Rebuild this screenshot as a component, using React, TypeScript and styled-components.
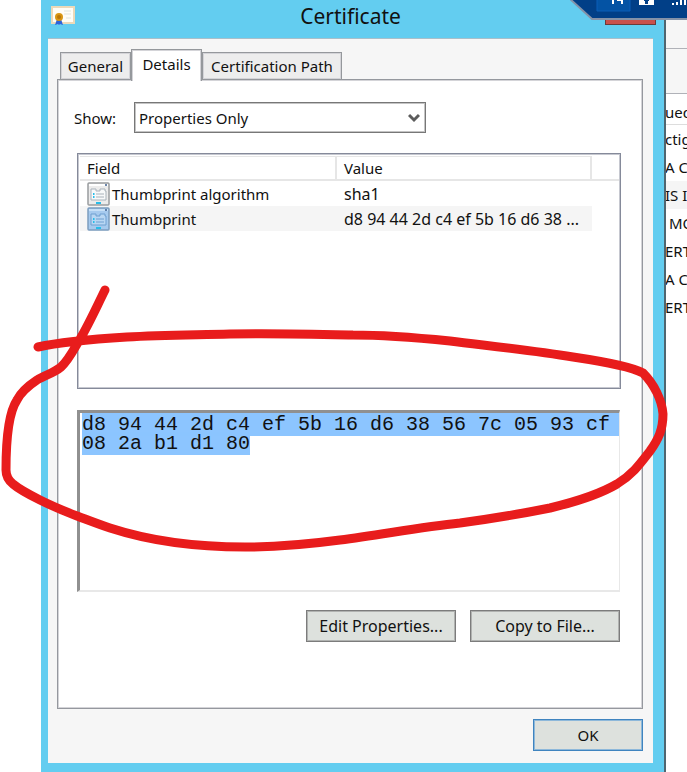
import React, { useEffect, useRef, useState } from "react";
import styled, { createGlobalStyle } from "styled-components";

const GlobalStyle = createGlobalStyle`
  * { box-sizing: border-box; }
  body {
    margin: 0;
    background: #fff;
    color: #111;
    font-family: "Noto Sans", "Open Sans", sans-serif;
    font-size: 15px;
    line-height: 20px;
    overflow: hidden;
  }
  button, select, textarea { font: inherit; color: inherit; margin: 0; }
`;

const Desktop = styled.div`
  position: relative;
  display: flex;
  min-height: 100vh;
  padding-left: 41px;
  overflow: hidden;
`;

const Dialog = styled.main`
  flex: 1;
  min-width: 0;
  display: flex;
  flex-direction: column;
  padding: 0 11px 9px 7px;
  background: #63cdf0;
`;

const TitleBar = styled.header`
  position: relative;
  display: flex;
  align-items: center;
  justify-content: center;
  height: 38px;
  padding-bottom: 6px;
`;

const TitleIcon = styled.svg`
  position: absolute;
  left: 3px;
  top: 6px;
`;

const Title = styled.h1`
  margin: 0;
  font-size: 21px;
  font-weight: 400;
  line-height: 28px;
`;

const CloseButton = styled.button`
  position: absolute;
  right: -3px;
  top: 0;
  width: 51px;
  height: 25px;
  border: 1px solid #6b3a3a;
  border-top: 0;
  background: #c9504c;
`;

const Client = styled.div`
  flex: 1;
  display: flex;
  flex-direction: column;
  padding: 10px 10px 12px 9px;
  border-top: 1px solid #a9bfca;
  background: #f6f6f6;
`;

const TabList = styled.div`
  display: flex;
  align-items: flex-end;
  padding-left: 3px;
`;

const Tab = styled.button<{ $active?: boolean; $width: number }>`
  position: relative;
  z-index: ${(p) => (p.$active ? 1 : 0)};
  flex: 0 0 ${(p) => p.$width}px;
  height: ${(p) => (p.$active ? 32 : 28)}px;
  margin-bottom: ${(p) => (p.$active ? -2 : -1)}px;
  padding: 0 0 ${(p) => (p.$active ? 3 : 0)}px;
  border: 1px solid #95989c;
  border-bottom-width: ${(p) => (p.$active ? 0 : 1)}px;
  box-shadow: ${(p) => (p.$active ? "inset 1px 0 #d4d4d8, inset -1px 0 #d4d4d8, inset 0 1px #d4d4d8" : "inset 0 0 0 1px #d4d4d8")};
  background: ${(p) => (p.$active ? "#fff" : "#ededed")};
  white-space: nowrap;
`;

const TabPage = styled.section`
  flex: 1;
  display: flex;
  flex-direction: column;
  padding: 22px 21px 66px 16px;
  border: 1px solid #95989e;
  box-shadow: inset 0 0 0 1px #d4d4d8;
  background: #fff;
`;

const ShowRow = styled.div`
  display: flex;
  align-items: center;
`;

const ShowLabel = styled.label`
  width: 60px;
`;

const SelectBox = styled.div`
  display: grid;
  flex: 0 1 292px;
  align-items: center;
  > * { grid-area: 1 / 1; }
  > svg { justify-self: end; margin-right: 6px; pointer-events: none; }
`;

const Select = styled.select`
  appearance: none;
  width: 100%;
  height: 31px;
  padding: 0 24px 0 4px;
  border: 1px solid #777;
  box-shadow: inset 0 0 0 1px #c4c4c4;
  border-radius: 0;
  background: #fff;
  outline: 0;
`;

const ListBox = styled.div`
  height: 236px;
  margin: 20px 0 0 3px;
  padding: 2px 1px 2px 2px;
  border: 1px solid #858a9a;
  box-shadow: inset 0 0 0 1px #c6c8d0;
`;

const FieldTable = styled.table`
  width: 100%;
  border-collapse: separate;
  border-spacing: 0;
  table-layout: fixed;
  col:nth-child(1) { width: 257px; }
  col:nth-child(3) { width: 27px; }
`;

const HeadCell = styled.th<{ $blank?: boolean }>`
  height: 25px;
  padding: 0 7px;
  border: 0 solid #e6e6e6;
  border-width: ${(p) => (p.$blank ? "0 0 2px" : "1px 2px 2px 0")};
  font-weight: 400;
  text-align: left;
`;

const Cell = styled.td<{ $selected?: boolean; $value?: boolean }>`
  height: 25px;
  padding: 0 7px;
  font-size: ${(p) => (p.$value ? 16 : 15)}px;
  background: ${(p) => (p.$selected ? "#f5f5f5" : "transparent")};
  white-space: nowrap;
  overflow: hidden;
  text-overflow: ellipsis;
`;

const FieldName = styled.div`
  display: flex;
  align-items: center;
  gap: 2px;
`;

const Detail = styled.textarea`
  display: block;
  height: 182px;
  margin: 21px 1px 0 3px;
  padding: 2px 0 0 2px;
  border: 3px solid #858585;
  border-width: 3px 1px 2px 3px;
  border-color: #909090 #e8e8e8 #e8e8e8 #909090;
  border-radius: 0;
  outline: 0;
  resize: none;
  overflow: hidden;
  font-family: "Liberation Mono", monospace;
  font-size: 20px;
  line-height: 19px;
  &::selection { background: rgba(139, 196, 255, 0.99); color: #111; }
`;

const Actions = styled.div`
  display: flex;
  justify-content: flex-end;
  gap: 14px;
  margin: 18px 1px 0 0;
`;

const PushButton = styled.button<{ $primary?: boolean }>`
  width: ${(p) => (p.$primary ? 110 : 150)}px;
  height: 32px;
  padding: 0;
  border: 1px solid ${(p) => (p.$primary ? "#3f84bf" : "#7c7c7c")};
  box-shadow: inset 0 0 0 1px ${(p) => (p.$primary ? "#8db8da" : "#b0b2b0")};
  background: #dde1dd;
  font-size: ${(p) => (p.$primary ? 15 : 16)}px;
`;

const Footer = styled.footer`
  display: flex;
  justify-content: flex-end;
  padding-top: 10px;
`;

const Behind = styled.aside`
  flex: 0 0 23px;
  overflow: hidden;
  border-left: 2px solid #4f6670;
  background: #fff;
  white-space: pre;
`;

const ToolStrip = styled.div<{ $height: number }>`
  height: ${(p) => p.$height}px;
  border-bottom: 1px solid #b0b2b8;
  background: #f6f6f6;
`;

const BehindRow = styled.div<{ $shade?: boolean; $head?: boolean }>`
  height: ${(p) => (p.$head ? 31 : 28)}px;
  padding-top: ${(p) => (p.$head ? 8 : 4)}px;
  border-bottom: ${(p) => (p.$head ? 1 : 0)}px solid #ddd;
  text-indent: -1px;
  background: ${(p) => (p.$shade ? "#f5f5f5" : "transparent")};
`;

const ConnectionBar = styled.svg`
  position: absolute;
  top: 0;
  right: 0;
`;

const Ink = styled.svg`
  position: absolute;
  left: 0;
  top: 0;
  pointer-events: none;
`;

function CertificateIcon() {
  return (
    <TitleIcon width="24" height="21" viewBox="0 0 24 21" aria-hidden="true">
      <rect x="1" y="1" width="22" height="16" fill="#fffdf6" stroke="#ecd9b8" strokeWidth="2" />
      <path d="M13 5h7M13 8h7M15 12h5" stroke="#dfe5e0" strokeWidth="1" />
      <path d="M6 13l-2 6 3-1 1 1 1-1 3 1-2-6z" fill="#2f62d9" />
      <circle cx="8" cy="11" r="4" fill="#d99614" />
      <circle cx="8" cy="11" r="2" fill="#b97508" />
    </TitleIcon>
  );
}

function PropertyIcon({ selected }: { selected?: boolean }) {
  const line = selected ? "#6f9fd0" : "#a9b2ba";
  return (
    <svg width="23" height="24" viewBox="0 0 23 24" aria-hidden="true">
      <rect x="1" y="1" width="21" height="22" rx="1" fill={selected ? "#a6caee" : "#ececec"} stroke={selected ? "#7c9dbf" : "#999c9e"} strokeWidth="1.5" />
      <path d="M2 3h19" stroke={selected ? "#c7e0f7" : "#fff"} strokeWidth="2" />
      <path d="M18 3h2" stroke="#3d5f91" strokeWidth="1.5" />
      <path d="M4 18V7h5v2h4V7h5v2h1v9z" fill={selected ? "#b9d7f3" : "#f8f9fa"} stroke={line} />
      <path d="M9 12h8M9 15h8" stroke={line} />
      <path d="M6 12h1.5M6 15h1.5M9 21h5" stroke="#27bde9" strokeWidth="2" />
    </svg>
  );
}

const behindRows = ["ctig", "A C", "IS I", " MO", "ERT", "A C", "ERT"];
const tabs = [
  { name: "General", width: 71 },
  { name: "Details", width: 71 },
  { name: "Certification Path", width: 140 },
];
const thumbprint = "d8 94 44 2d c4 ef 5b 16 d6 38 56 7c 05 93 cf 08 2a b1 d1 80";

export default function App() {
  const detail = useRef<HTMLTextAreaElement>(null);
  const [active, setActive] = useState("Details");

  useEffect(() => {
    detail.current?.focus();
    detail.current?.select();
  }, []);

  return (
    <>
      <GlobalStyle />
      <Desktop>
        <Dialog>
          <TitleBar>
            <CertificateIcon />
            <Title>Certificate</Title>
            <CloseButton type="button" aria-label="Close" />
          </TitleBar>
          <Client>
            <TabList role="tablist">
              {tabs.map((t) => (
                <Tab
                  key={t.name}
                  type="button"
                  role="tab"
                  aria-selected={t.name === active}
                  $active={t.name === active}
                  $width={t.width}
                  onClick={() => setActive(t.name)}
                >
                  {t.name}
                </Tab>
              ))}
            </TabList>
            <TabPage>
              <ShowRow>
                <ShowLabel htmlFor="show">Show:</ShowLabel>
                <SelectBox>
                  <Select id="show" defaultValue="Properties Only">
                    <option>Properties Only</option>
                  </Select>
                  <svg width="12" height="10" viewBox="0 0 12 10" aria-hidden="true">
                    <path d="M1 2l5 5 5-5" fill="none" stroke="#5c5c5c" strokeWidth="3" />
                  </svg>
                </SelectBox>
              </ShowRow>
              <ListBox>
                <FieldTable>
                  <colgroup><col /><col /><col /></colgroup>
                  <thead>
                    <tr>
                      <HeadCell scope="col">Field</HeadCell>
                      <HeadCell scope="col">Value</HeadCell>
                      <HeadCell as="td" $blank />
                    </tr>
                  </thead>
                  <tbody>
                    <tr>
                      <Cell><FieldName><PropertyIcon />Thumbprint algorithm</FieldName></Cell>
                      <Cell $value>sha1</Cell>
                    </tr>
                    <tr>
                      <Cell $selected><FieldName><PropertyIcon selected />Thumbprint</FieldName></Cell>
                      <Cell $selected $value>d8 94 44 2d c4 ef 5b 16 d6 38 ...</Cell>
                    </tr>
                  </tbody>
                </FieldTable>
              </ListBox>
              <Detail ref={detail} aria-label="Thumbprint value" readOnly spellCheck={false} value={thumbprint} />
              <Actions>
                <PushButton type="button">Edit Properties...</PushButton>
                <PushButton type="button">Copy to File...</PushButton>
              </Actions>
            </TabPage>
            <Footer>
              <PushButton type="button" $primary>OK</PushButton>
            </Footer>
          </Client>
        </Dialog>
        <Behind>
          <ToolStrip $height={49} />
          <ToolStrip $height={45} />
          <BehindRow $head>ued</BehindRow>
          {behindRows.map((text, i) => (
            <BehindRow key={i} $shade={i === 2}>{text}</BehindRow>
          ))}
        </Behind>
        <ConnectionBar width="117" height="21" viewBox="0 0 117 21" aria-hidden="true">
          <path d="M0 -1L22 19H118V-1z" fill="#013f87" stroke="#8492a8" strokeWidth="2" />
          <path d="M27 -1h33v12H27z" fill="#0453a4" stroke="#0a5fb8" />
          <path d="M43 0v4M52 0v4" stroke="#fff" strokeWidth="2" />
          <path d="M47 0h6v1h-6z" fill="#fff" />
          <path d="M69 0h15v5H69z" fill="#fff" />
          <path d="M74 0h5v1h-1v3h-3V1h-1z" fill="#013f87" />
          <path d="M103 3v2M107 2v3M111 0v5M115 0v5" stroke="#fff" strokeWidth="2" />
        </ConnectionBar>
        <Ink width="687" height="772" viewBox="0 0 687 772" fill="none" stroke="#e81c1c" strokeWidth="9" strokeLinecap="round" strokeLinejoin="round" aria-hidden="true">
          <path d="M105 290C97 306 89 324 80 339C73 351 68 361 61 367C54 373 45 375 37 380C28 386 21 392 17 400C9 412 6 440 6 470C6 476 8 480 13 484C20 490 30 495 40 500C52 506 64 511 77 516C88 520 98 524 110 528C150 541 200 547 245 547C280 547 310 544 340 540C380 535 420 527 460 523C490 519 520 514 550 508C575 502 600 494 617 484C633 474 640 464 650 451C658 440 663 430 663 414C662 400 654 384 643 373C630 366 600 361 573 357C530 350 490 346 450 341C410 337 380 335 353 335C310 334 270 333 230 334C190 335 160 335 127 337C95 339 60 342 38 347" />
        </Ink>
      </Desktop>
    </>
  );
}
